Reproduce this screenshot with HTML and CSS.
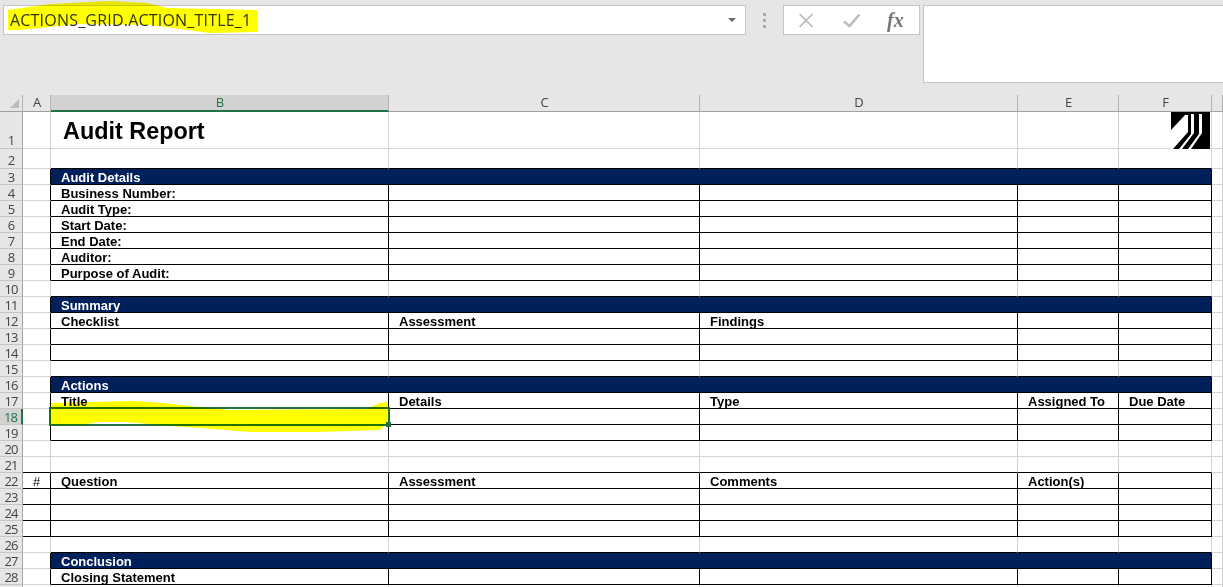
FILE: index.html
```html
<!DOCTYPE html>
<html lang="en">
<head>
<meta charset="utf-8">
<title>Audit Report</title>
<link rel="stylesheet" href="styles.css">
</head>
<body>
<div class="app">
  <div class="formula-bar">
    <div class="name-box">
      <span class="name-text">ACTIONS_GRID.ACTION_TITLE_1</span>
      <span class="arrow"></span>
    </div>
    <div class="grip"><i></i><i></i><i></i></div>
    <div class="fx-box">
      <svg class="ic-x" width="16" height="15" viewBox="0 0 16 15"><path d="M1.5 1 14.5 14M14.5 1 1.5 14" fill="none" stroke="#b9b9b9" stroke-width="1.7"/></svg>
      <svg class="ic-check" width="18" height="15" viewBox="0 0 18 15"><path d="M1 8.5 6.5 13 16.5 1.5" fill="none" stroke="#bdbdbd" stroke-width="2.6"/></svg>
      <span class="fx">fx</span>
    </div>
    <div class="formula-input"></div>
  </div>
  <div class="sheet">
    <table class="grid">
      <colgroup><col class="c0"><col class="ca"><col class="cb"><col class="cc"><col class="cd"><col class="ce"><col class="cf"><col class="cg"></colgroup>
      <tr class="head"><th class="corner"><span class="tri"></span></th><th>A</th><th class="on">B</th><th>C</th><th>D</th><th>E</th><th>F</th><th></th></tr>
      <tr class="r1"><th>1</th><td></td><td class="title">Audit Report</td><td></td><td></td><td></td><td class="logo-cell"></td><td></td></tr>
      <tr class="r2"><th>2</th><td></td><td class="kb"></td><td class="kb"></td><td class="kb"></td><td class="kb"></td><td class="kb"></td><td></td></tr>
      <tr><th>3</th><td class="kr"></td><td class="band" colspan="5">Audit Details</td><td></td></tr>
      <tr><th>4</th><td class="kr"></td><td class="k">Business Number:</td><td class="k"></td><td class="k"></td><td class="k"></td><td class="k"></td><td></td></tr>
      <tr><th>5</th><td class="kr"></td><td class="k">Audit Type:</td><td class="k"></td><td class="k"></td><td class="k"></td><td class="k"></td><td></td></tr>
      <tr><th>6</th><td class="kr"></td><td class="k">Start Date:</td><td class="k"></td><td class="k"></td><td class="k"></td><td class="k"></td><td></td></tr>
      <tr><th>7</th><td class="kr"></td><td class="k">End Date:</td><td class="k"></td><td class="k"></td><td class="k"></td><td class="k"></td><td></td></tr>
      <tr><th>8</th><td class="kr"></td><td class="k">Auditor:</td><td class="k"></td><td class="k"></td><td class="k"></td><td class="k"></td><td></td></tr>
      <tr><th>9</th><td class="kr"></td><td class="k">Purpose of Audit:</td><td class="k"></td><td class="k"></td><td class="k"></td><td class="k"></td><td></td></tr>
      <tr><th>10</th><td></td><td class="kb"></td><td class="kb"></td><td class="kb"></td><td class="kb"></td><td class="kb"></td><td></td></tr>
      <tr><th>11</th><td class="kr"></td><td class="band" colspan="5">Summary</td><td></td></tr>
      <tr><th>12</th><td class="kr"></td><td class="k">Checklist</td><td class="k">Assessment</td><td class="k">Findings</td><td class="k"></td><td class="k"></td><td></td></tr>
      <tr><th>13</th><td class="kr"></td><td class="k"></td><td class="k"></td><td class="k"></td><td class="k"></td><td class="k"></td><td></td></tr>
      <tr><th>14</th><td class="kr"></td><td class="k"></td><td class="k"></td><td class="k"></td><td class="k"></td><td class="k"></td><td></td></tr>
      <tr><th>15</th><td></td><td class="kb"></td><td class="kb"></td><td class="kb"></td><td class="kb"></td><td class="kb"></td><td></td></tr>
      <tr><th>16</th><td class="kr"></td><td class="band" colspan="5">Actions</td><td></td></tr>
      <tr><th>17</th><td class="kr"></td><td class="k">Title</td><td class="k">Details</td><td class="k">Type</td><td class="k">Assigned To</td><td class="k">Due Date</td><td></td></tr>
      <tr><th class="on-row">18</th><td class="kr"></td><td class="k"></td><td class="k"></td><td class="k"></td><td class="k"></td><td class="k"></td><td></td></tr>
      <tr><th>19</th><td class="kr"></td><td class="k"></td><td class="k"></td><td class="k"></td><td class="k"></td><td class="k"></td><td></td></tr>
      <tr><th>20</th><td></td><td></td><td></td><td></td><td></td><td></td><td></td></tr>
      <tr><th>21</th><td class="kb"></td><td class="kb"></td><td class="kb"></td><td class="kb"></td><td class="kb"></td><td class="kb"></td><td></td></tr>
      <tr><th>22</th><td class="k num">#</td><td class="k">Question</td><td class="k">Assessment</td><td class="k">Comments</td><td class="k">Action(s)</td><td class="k"></td><td></td></tr>
      <tr><th>23</th><td class="k"></td><td class="k"></td><td class="k"></td><td class="k"></td><td class="k"></td><td class="k"></td><td></td></tr>
      <tr><th>24</th><td class="k"></td><td class="k"></td><td class="k"></td><td class="k"></td><td class="k"></td><td class="k"></td><td></td></tr>
      <tr><th>25</th><td class="k"></td><td class="k"></td><td class="k"></td><td class="k"></td><td class="k"></td><td class="k"></td><td></td></tr>
      <tr><th>26</th><td></td><td class="kb"></td><td class="kb"></td><td class="kb"></td><td class="kb"></td><td class="kb"></td><td></td></tr>
      <tr><th>27</th><td class="kr"></td><td class="band" colspan="5">Conclusion</td><td></td></tr>
      <tr><th>28</th><td class="kr"></td><td class="k">Closing Statement</td><td class="k"></td><td class="k"></td><td class="k"></td><td class="k"></td><td></td></tr>
      <tr><th></th><td></td><td></td><td></td><td></td><td></td><td></td><td></td></tr>
    </table>
    <svg class="logo" width="39" height="37" viewBox="0 0 39 37">
      <rect width="39" height="37" fill="#000"/>
      <path d="M0 18 14 3H17V20L2 37H0Z M20 2H23V21L11 37H8L20 22Z M28 2H31V21L20 37H17L28 22Z" fill="#fff"/>
    </svg>
    <div class="selection"><span class="handle"></span></div>
  </div>
  <svg class="marker" width="1223" height="587" viewBox="0 0 1223 587">
    <path d="M8 10 50 4 110 1 147 3 167 8 257 10 258 32 210 33 150 25 77 24 20 30 8 30Z" fill="#ffff00"/>
    <path d="M49 403 90 402 133 401 163 403 190 406 230 410 367 409 380 403 389 402 389 420 380 430 317 432 250 432 200 428 170 426 127 422 100 422 80 425 49 425Z" fill="#ffff00"/>
  </svg>
</div>
</body>
</html>
```
FILE: styles.css
```css
* { box-sizing: border-box; }
html, body { margin: 0; padding: 0; height: 100%; overflow: hidden; background: #e6e6e6; }
.app { position: relative; width: 1223px; height: 587px; overflow: hidden; font-family: "Liberation Sans", Arial, sans-serif; }

.formula-bar { display: flex; align-items: flex-start; height: 95px; padding: 5px 0 0 3px; background: #e6e6e6; }
.name-box { display: flex; align-items: center; justify-content: space-between; width: 743px; height: 30px; padding: 0 9px 0 6px; background: #fff; border: 1px solid #c6c6c6; }
.name-text { font: 16px "Open Sans", sans-serif; letter-spacing: 0.2px; color: #333; white-space: nowrap; }
.arrow { width: 0; height: 0; border-left: 4px solid transparent; border-right: 4px solid transparent; border-top: 4px solid #6a6a6a; }
.grip { display: flex; flex-direction: column; gap: 3px; width: 37px; height: 30px; padding: 8px 0 0 17px; }
.grip i { display: block; width: 3px; height: 3px; background: #ababab; }
.fx-box { display: flex; align-items: center; width: 137px; height: 30px; padding-left: 14px; background: #fff; border: 1px solid #c6c6c6; }
.ic-check { margin-left: 29px; }
.fx { margin-left: 26px; font: italic bold 20px "Liberation Serif", serif; color: #777; }
.formula-input { width: 300px; height: 78px; margin-left: 3px; background: #fff; border: 1px solid #c6c6c6; border-right: 0; }

.sheet { position: relative; background: #fff; }
.grid { table-layout: fixed; width: 1223px; border-collapse: separate; border-spacing: 0; }
.c0 { width: 23px; } .ca { width: 28px; } .cb { width: 338px; } .cc { width: 311px; }
.cd { width: 318px; } .ce { width: 101px; } .cf { width: 93px; } .cg { width: 11px; }
tr { height: 16px; }
tr.head { height: 17px; }
tr.r1 { height: 37px; }
tr.r2 { height: 20px; }

th { padding: 0; height: inherit; font: 400 13px/14px "Open Sans", sans-serif; color: #444; text-align: center; vertical-align: bottom; letter-spacing: -1px; background: #e6e6e6; border-right: 1px solid #a6a6a6; border-bottom: 1px solid #c6c6c6; overflow: hidden; }
.head th { padding: 0 0 0 1px; line-height: 14px; vertical-align: top; letter-spacing: 0; overflow: visible; border-bottom: 1px solid #a0a0a0; border-right: 1px solid #b4b4b4; }
.r1 th, .r2 th { padding-bottom: 1px; }
th.corner { position: relative; }
.tri { position: absolute; left: 10px; top: 4px; width: 0; height: 0; border-left: 9px solid transparent; border-bottom: 9px solid #bcbcbc; }
.head th.on { background: #d2d2d2; color: #217346; border-bottom: 2px solid #217346; }
th.on-row { background: #d2d2d2; color: #217346; border-right: 2px solid #217346; }

td { padding: 0 0 0 10px; height: inherit; font: 700 13px/12px "Liberation Sans", Arial, sans-serif; letter-spacing: 0; color: #000; white-space: nowrap; vertical-align: bottom; border-right: 1px solid #d4d4d4; border-bottom: 1px solid #d4d4d4; overflow: hidden; }
td.title { padding: 2px 0 0 12px; font-size: 23.4px; line-height: 34px; vertical-align: middle; }
td.k { border-right-color: #000; border-bottom-color: #000; }
td.kr { border-right-color: #000; }
td.kb { border-bottom-color: #000; }
td.num { padding: 0; text-align: center; font-weight: 400; }
td.band { background: #00205b; color: #fff; border-right-color: #000; border-bottom-color: #000; }

.logo { position: absolute; left: 1171px; top: 17px; }
.selection { position: absolute; left: 49px; top: 312px; width: 341px; height: 19px; border: 2px solid #217346; }
.handle { position: absolute; right: -3px; bottom: -3px; width: 5px; height: 5px; background: #217346; }
.marker { position: absolute; left: 0; top: 0; mix-blend-mode: multiply; pointer-events: none; }
```
